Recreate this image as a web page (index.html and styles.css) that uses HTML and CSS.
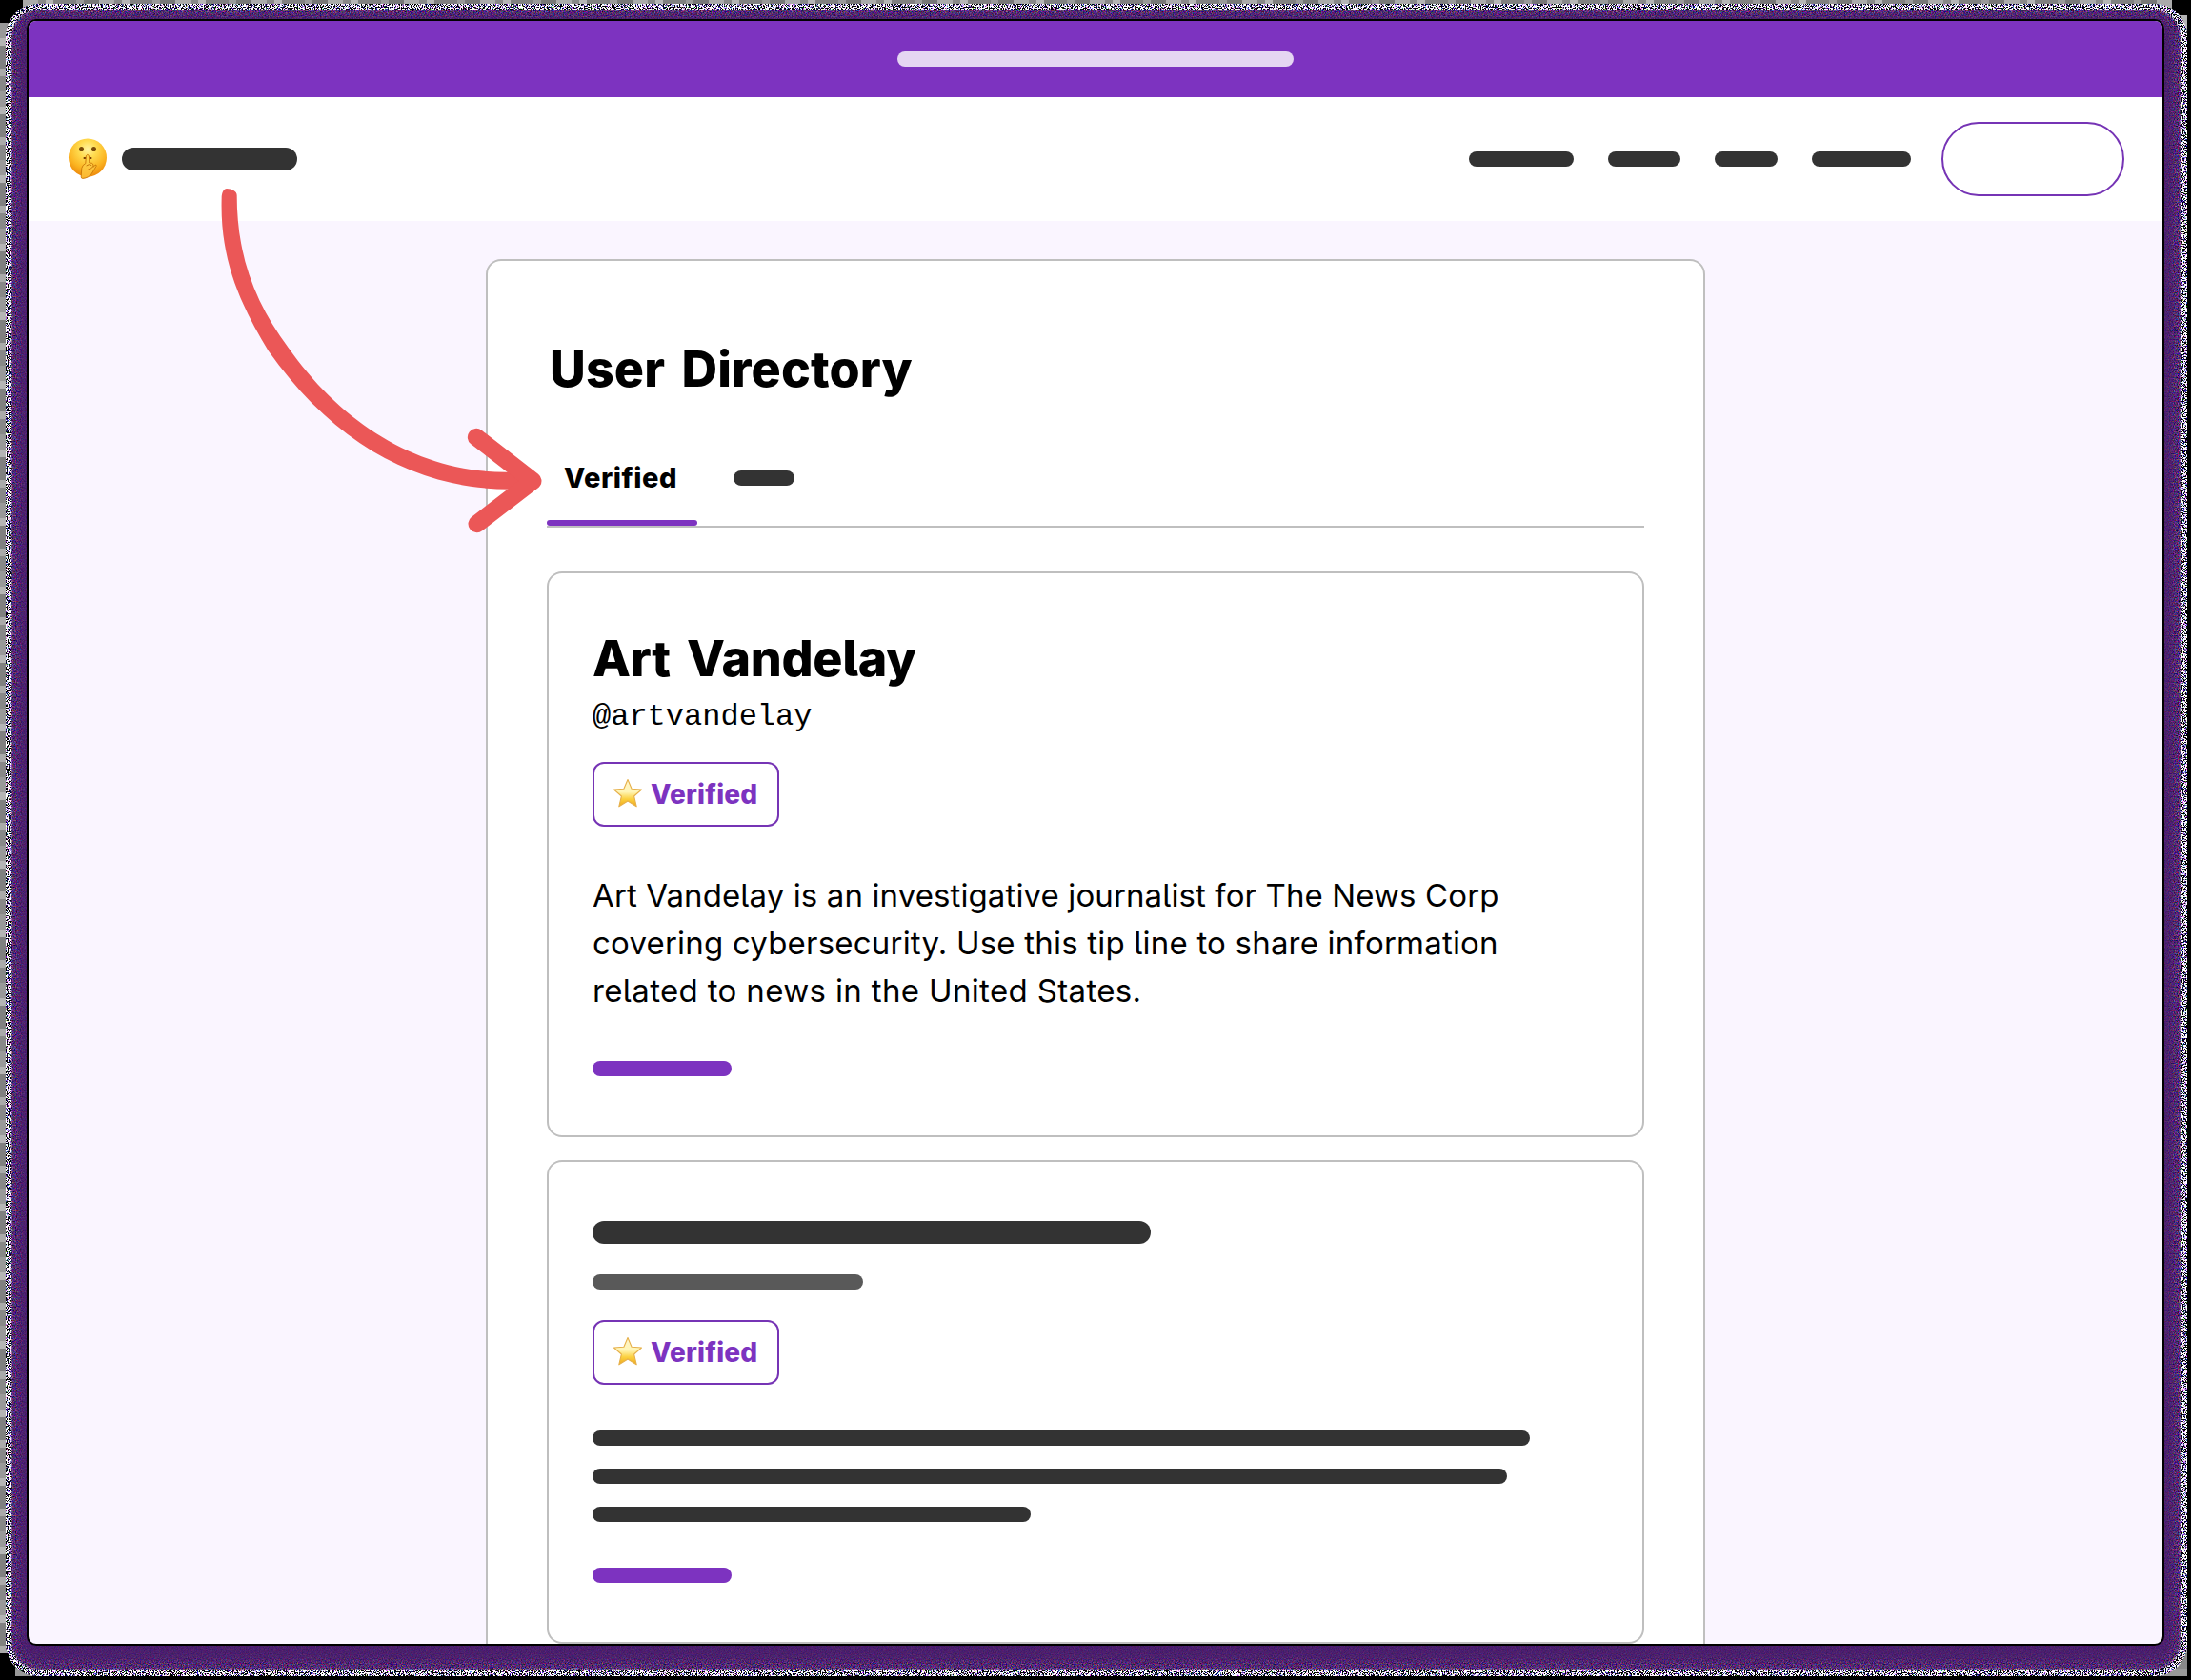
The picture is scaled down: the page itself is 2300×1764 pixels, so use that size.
FILE: index.html
```html
<!DOCTYPE html>
<html lang="en">
<head>
<meta charset="utf-8">
<title>User Directory</title>
<link rel="stylesheet" href="styles.css">
</head>
<body>
<svg class="backdrop" width="2300" height="1764" aria-hidden="true">
  <defs>
    <filter id="static" x="0" y="0" width="100%" height="100%" color-interpolation-filters="sRGB">
      <feTurbulence type="fractalNoise" baseFrequency="0.83" numOctaves="2" seed="4"/>
      <feColorMatrix values="14 0 0 0 -6.300  12 2 0 0 -6.400  12 0 2 0 -6.100  0 0 0 0 1"/>
      <feComposite in2="SourceGraphic" operator="in"/>
    </filter>
    <filter id="grain" x="0" y="0" width="100%" height="100%" color-interpolation-filters="sRGB">
      <feTurbulence type="fractalNoise" baseFrequency="0.8" numOctaves="2" seed="9" result="n"/>
      <feColorMatrix in="n" values="1.500 0 0 0 -0.420  0 1.100 0 0 -0.380  0 0 1.300 0 -0.200  0 0 0 0 1" result="c"/>
      <feGaussianBlur in="SourceGraphic" stdDeviation="1.200" result="edge"/>
      <feComposite in="c" in2="edge" operator="in"/>
    </filter>
    <filter id="soft"><feGaussianBlur stdDeviation="4"/></filter>
  </defs>
  <rect x="6" y="4" width="2290" height="1756" rx="34" filter="url(#static)"/>
  <rect x="12" y="10" width="2277" height="1743" rx="30" filter="url(#grain)"/>
  <rect x="19" y="17" width="2262" height="1728" rx="20" fill="#4a1a6c" opacity=".8" filter="url(#soft)"/>
</svg>

<div class="window">
  <div class="banner"><span class="bar banner-bar"></span></div>
  <header class="nav">
    <svg class="logo" viewBox="0 0 42 44" aria-hidden="true">
      <defs>
        <radialGradient id="face" cx=".5" cy=".28" r=".75">
          <stop offset="0" stop-color="#fff3a0"/><stop offset=".3" stop-color="#ffdc50"/><stop offset=".68" stop-color="#fbb421"/><stop offset="1" stop-color="#ea8208"/>
        </radialGradient>
        <linearGradient id="hand" x1="0" y1="0" x2="0" y2="1">
          <stop offset="0" stop-color="#ffd84e"/><stop offset="1" stop-color="#fbb730"/>
        </linearGradient>
      </defs>
      <circle cx="21" cy="20.500" r="20" fill="url(#face)"/>
      <ellipse cx="14.500" cy="11.500" rx="2.500" ry="2.600" fill="#7a4a08"/>
      <ellipse cx="27.500" cy="11.500" rx="2.500" ry="2.600" fill="#7a4a08"/>
      <path d="M17.400 21h1.400M23.200 21h1.400" fill="none" stroke="#7a4205" stroke-width="1.800" stroke-linecap="round"/>
      <path d="M19.400 18.600q1.500-2.600 3 0l.4 7.400q3.600-.4 4.200 2l-.2 2.400 2.200-2q1.400-.8 1.200.8l-4.800 8q-3.400 4.800-9.600 5.200-1.800 0-1.600-2.200l.6-8.600q.6-3.400 4-5z" fill="url(#hand)" stroke="#c97406" stroke-width=".9"/>
      <path d="M19.600 29q3-2.400 5.600-.4M21.400 33q3-.4 5.200-3" fill="none" stroke="#c06c06" stroke-width=".9"/>
    </svg>
    <span class="bar brand"></span>
    <nav class="links">
      <span class="bar link-a"></span>
      <span class="bar link-b"></span>
      <span class="bar link-c"></span>
      <span class="bar link-d"></span>
    </nav>
    <a class="pill"></a>
  </header>

  <main class="page">
    <section class="directory">
      <h1>User Directory</h1>
      <div class="tabs">
        <div class="tab active">Verified</div>
        <div class="tab"><span class="bar tab-bar"></span></div>
      </div>

      <article class="card">
        <h2>Art Vandelay</h2>
        <p class="handle">@artvandelay</p>
        <span class="badge">
          <svg class="star" viewBox="0 0 32 32" aria-hidden="true">
            <defs><linearGradient id="gold" x1="0" y1="0" x2="0" y2="1">
              <stop offset="0" stop-color="#fff4c8"/><stop offset=".45" stop-color="#fff6b8"/><stop offset=".72" stop-color="#fbd140"/><stop offset="1" stop-color="#f0a818"/>
            </linearGradient></defs>
            <path d="M16 1.500 20.100 11.200 30.500 12 22.600 19 25.200 29.800 16 24 6.800 29.800 9.400 19 1.500 12 11.900 11.200z" fill="url(#gold)" stroke="#e6b04a" stroke-width="1.100" stroke-linejoin="round"/>
          </svg>
          <b>Verified</b>
        </span>
        <p class="bio"><span class="bio-1">Art Vandelay is an investigative journalist for The News Corp</span><br><span class="bio-2">covering cybersecurity. Use this tip line to share information</span><br><span class="bio-3">related to news in the United States.</span></p>
        <span class="bar more"></span>
      </article>

      <article class="card">
        <span class="bar name-bar"></span>
        <span class="bar handle-bar"></span>
        <span class="badge">
          <svg class="star" viewBox="0 0 32 32" aria-hidden="true">
            <path d="M16 1.500 20.100 11.200 30.500 12 22.600 19 25.200 29.800 16 24 6.800 29.800 9.400 19 1.500 12 11.900 11.200z" fill="url(#gold)" stroke="#e6b04a" stroke-width="1.100" stroke-linejoin="round"/>
          </svg>
          <b>Verified</b>
        </span>
        <div class="lines">
          <span class="bar line-a"></span>
          <span class="bar line-b"></span>
          <span class="bar line-c"></span>
        </div>
        <span class="bar more"></span>
      </article>
    </section>
  </main>
</div>

<svg class="arrow" viewBox="0 0 1200 1200" aria-hidden="true">
  <path d="M98 85C98 65 105 54 114 54C130 55 146 62 146 75C146 270 205 415 308 555C480 800 730 955 1015 947L1060 975L1018 1001C720 1005 455 862 245 565C165 430 92 290 98 85Z" fill="#eb5757"/>
  <path d="M900 837 1078 975 902 1110" fill="none" stroke="#eb5757" stroke-width="55" stroke-linecap="round" stroke-linejoin="round"/>
</svg>
</body>
</html>
```
FILE: styles.css
```css
* { box-sizing: border-box; }

body {
  margin: 0;
  width: 2300px;
  height: 1764px;
  overflow: hidden;
  position: relative;
  padding: 20px 28px;
  background:
    linear-gradient(#000, #000) 0 0 / 24px 24px no-repeat,
    linear-gradient(#000, #000) 100% 0 / 20px 16px no-repeat,
    linear-gradient(#000, #000) 0 100% / 16px 28px no-repeat,
    linear-gradient(#000, #000) 0 100% / 100% 4px no-repeat,
    linear-gradient(#000, #000) 100% 0 / 4px 100% no-repeat,
    repeating-linear-gradient(90deg, #999 0 8px, #777 8px 24px, #aaa 24px 40px, #888 40px 48px, #b5b5b5 48px 56px, #808080 56px 80px) 0 0 / 100% 30px no-repeat,
    repeating-linear-gradient(#aaa 0 8px, #888 8px 24px, #999 24px 40px, #b5b5b5 40px 48px, #808080 48px 72px);
  font-family: Inter, "Liberation Sans", sans-serif;
  font-feature-settings: "cv05";
  color: #000;
}

.backdrop { position: absolute; left: 0; top: 0; }

.window {
  position: relative;
  width: 2244px;
  height: 1708px;
  border: 2px solid #000;
  border-radius: 10px;
  overflow: hidden;
  background: #faf5ff;
  display: flex;
  flex-direction: column;
}

.bar {
  display: block;
  flex: none;
  height: 16px;
  border-radius: 12px;
  background: #333;
}

.banner {
  flex: none;
  height: 80px;
  background: #7d33c0;
  display: flex;
  align-items: center;
  justify-content: center;
}
.banner-bar { width: 416px; background: #e5d6f2; }

.nav {
  flex: none;
  height: 130px;
  padding: 0 40px 0 41px;
  background: #fff;
  display: flex;
  align-items: center;
}
.logo { width: 42px; height: 44px; margin: 0 15px 0 0; }
.brand { width: 184px; height: 24px; }
.links { display: flex; gap: 36px; margin-left: auto; margin-right: 32px; }
.link-a { width: 110px; }
.link-b { width: 76px; }
.link-c { width: 66px; }
.link-d { width: 104px; }
.pill {
  width: 192px;
  height: 78px;
  border: 2px solid #7634b5;
  border-radius: 39px;
}

.page { flex: 1; padding-top: 40px; display: flex; justify-content: center; }

.directory {
  width: 1280px;
  height: 1500px;
  padding: 82px 62px 0;
  border: 2px solid #bfbfbf;
  border-radius: 16px;
  background: #fff;
}

h1, h2, p { margin: 0; }

h1,
h2 {
  height: 64px;
  font-size: 52px;
  line-height: 64px;
  font-weight: 800;
  letter-spacing: -.3px;
  word-spacing: 6px;
  white-space: nowrap;
}
h1 { padding-left: 3px; letter-spacing: .1px; }

.tabs {
  height: 81px;
  margin: 53px 0 46px;
  border-bottom: 2px solid #bfbfbf;
  display: flex;
}
.tab { height: 79px; padding: 13px 0 0 18px; }
.tab.active {
  width: 158px;
  font-size: 29px;
  line-height: 32px;
  font-weight: 800;
  letter-spacing: .55px;
  position: relative;
}
.tab.active::after {
  content: "";
  position: absolute;
  left: 0;
  right: 0;
  bottom: 0;
  height: 6px;
  border-radius: 3px;
  background: #7d33c0;
}
.tab-bar { width: 64px; margin: 8px 0 0 20px; }

.card {
  padding: 62px 46px;
  margin-bottom: 24px;
  border: 2px solid #bfbfbf;
  border-radius: 16px;
  display: flex;
  flex-direction: column;
  align-items: flex-start;
}
.card:first-of-type { height: 594px; padding-top: 58px; }

.handle {
  height: 40px;
  margin-top: 9px;
  font: 32px/40px "Liberation Mono", monospace;
}

.badge {
  width: 196px;
  height: 68px;
  margin-top: 27px;
  padding-left: 19px;
  border: 2px solid #7634b5;
  border-radius: 12px;
  display: flex;
  align-items: center;
  color: #7d33c0;
}
.star { width: 32px; height: 32px; margin: -3px 8px 0 0; }
.badge b { font-size: 28px; line-height: 32px; font-weight: 800; letter-spacing: .2px; }

.bio {
  margin-top: 47px;
  font-size: 33px;
  line-height: 50px;
  white-space: nowrap;
}
.bio-1 { letter-spacing: .11px; }
.bio-2 { letter-spacing: .2px; }
.bio-3 { letter-spacing: .35px; }
.more { width: 146px; background: #7d33c0; margin-top: 49px; }

.name-bar { width: 586px; height: 24px; }
.handle-bar { width: 284px; margin-top: 32px; background: #595959; }
.handle-bar + .badge { margin-top: 32px; }
.lines { display: flex; flex-direction: column; gap: 24px; margin-top: 48px; }
.lines + .more { margin-top: 48px; }
.line-a { width: 984px; }
.line-b { width: 960px; }
.line-c { width: 460px; }

.arrow { position: absolute; left: 200px; top: 180px; width: 400px; height: 400px; }
```
